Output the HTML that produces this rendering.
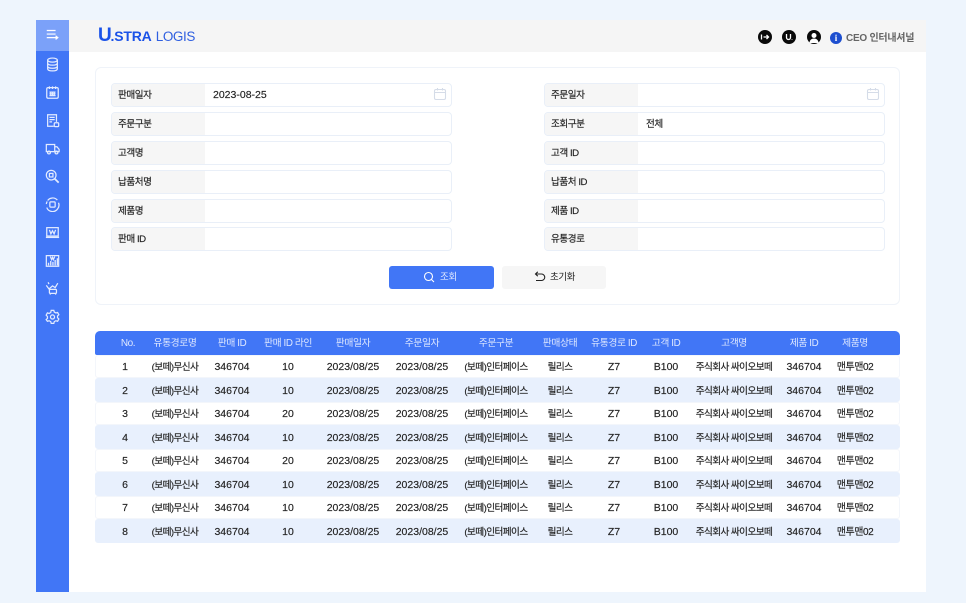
<!DOCTYPE html>
<html lang="ko"><head><meta charset="utf-8"><style>
*{box-sizing:border-box;margin:0;padding:0}
html,body{width:966px;height:603px;overflow:hidden;background:#eef5fd;font-family:"Liberation Sans","Noto Sans CJK KR",sans-serif;color:#222}
.a{position:absolute}
#side{left:36px;top:20px;width:33px;height:572px;background:#4176f6}
#side .top{position:absolute;left:0;top:0;width:33px;height:31px;background:#7ba1f9}
#side svg{position:absolute;left:9px;width:15px;height:15px;margin-top:1px;fill:none;stroke:#e3ebff;stroke-width:1.4}
#main{left:69px;top:20px;width:857px;height:572px;background:#fff}
#head{left:69px;top:20px;width:857px;height:32px;background:#f5f5f5}
#panel{left:95px;top:67px;width:805px;height:238px;border:1px solid #eff3f9;border-radius:6px;background:#fff}
.f{position:absolute;width:341px;height:24px;border:1px solid #e9eff8;border-radius:4px;background:#fff;overflow:hidden;font-size:9.6px;letter-spacing:-.45px;line-height:23px;-webkit-text-stroke:.15px #222}
.f b{display:block;position:absolute;left:0;top:0;width:93px;height:22px;background:#f6f6f6;font-weight:normal;padding-left:6px;color:#222}
.f i{position:absolute;left:101px;top:0;font-style:normal;color:#222}
.f i.n{font-size:10.5px;letter-spacing:0;line-height:22px}
.f svg{position:absolute;left:321px;top:3px;width:14px;height:14px;fill:none;stroke:#d5dce8;stroke-width:1.1}
.btn{position:absolute;top:266px;height:23px;border-radius:3px;font-size:9.5px;letter-spacing:-.4px;line-height:24px}
.row{position:absolute;left:95px;width:805px;height:23px;font-size:10.5px;line-height:23px;border-radius:3px;background:#fff;border:1px solid #f3f6fb;-webkit-text-stroke:.15px #222}
.row.b{background:#e8f0fd;border-color:#e8f0fd}
.row.b span{top:1px}
.row.h{background:#4176f6;border-color:#4176f6;color:#dfe8ff;border-radius:5px 5px 2px 2px;font-size:9.8px;letter-spacing:-.4px;height:24px;line-height:24px;-webkit-text-stroke:0}
.row span{position:absolute;top:0;width:120px;margin-left:-61px;text-align:center;white-space:nowrap}
.row span:nth-child(1){left:33px;font-size:10px}.row span:nth-child(2){left:80px}.row span:nth-child(3){left:137px}.row span:nth-child(4){left:193px}.row span:nth-child(5){left:258px}.row span:nth-child(6){left:327px}.row span:nth-child(7){left:401px}.row span:nth-child(8){left:465px}.row span:nth-child(9){left:519px}.row span:nth-child(10){left:571px}.row span:nth-child(11){left:639px}.row span:nth-child(12){left:709px}.row span:nth-child(13){left:760px}
.d span:nth-child(1){left:30px;font-size:10.5px}
.d span:nth-child(2),.d span:nth-child(7),.d span:nth-child(8),.d span:nth-child(11){font-size:9.6px;letter-spacing:-.55px}
.d span:nth-child(13){font-size:10px;letter-spacing:-.45px}
.ic{position:absolute;top:30px;width:14px;height:14px;border-radius:50%;background:#0a0a0a}
</style></head><body>
<div class="a" id="main"></div>
<div class="a" id="head"></div>
<div class="a" id="side">
<div class="top"></div>
<svg style="top:6px" viewBox="0 0 17 17"><path d="M2 4h10M2 8h10M2 12h12M12 10l2.500 2-2.500 2" stroke="#fff"/></svg>
<svg style="top:36px" viewBox="0 0 17 17"><ellipse cx="8.500" cy="3.500" rx="5.500" ry="2.300"/><path d="M3 3.500v10c0 3 11 3 11 0v-10M3 7c0 3 11 3 11 0M3 10.500c0 3 11 3 11 0"/></svg>
<svg style="top:64px" viewBox="0 0 17 17"><rect x="2" y="3" width="13" height="12" rx="1.500"/><path d="M5 1.500v3M8.500 1.500v3M12 1.500v3M5 8h7M5 10h7M5 12h7M6.500 7.500v5M8.500 7.500v5M10.500 7.500v5"/></svg>
<svg style="top:92px" viewBox="0 0 17 17"><path d="M10 15H3V2h10v8M5 5h6M5 7.500h6M5 10h3"/><rect x="10.500" y="11" width="5" height="4.500" rx="1"/></svg>
<svg style="top:120px" viewBox="0 0 17 17"><path d="M11 12H1.500V4h9.500v8zM11 6.500h2.500l2.500 3V12h-5"/><circle cx="4.500" cy="13" r="1.600"/><circle cx="13" cy="13" r="1.600"/></svg>
<svg style="top:148px" viewBox="0 0 17 17"><circle cx="7" cy="7" r="5.500"/><rect x="5" y="5" width="4" height="4"/><path d="M11 11l4.500 4.500" stroke-width="2"/></svg>
<svg style="top:176px" viewBox="0 0 17 17"><path d="M3 4a7 7 0 0 1 11-.500M15.300 6.500a7 7 0 0 1-1 7A7 7 0 0 1 2 12M1.500 8a7 7 0 0 1 1-3"/><rect x="5.500" y="5.500" width="6" height="6" rx="1"/></svg>
<svg style="top:204px" viewBox="0 0 17 17"><rect x="2" y="3" width="13" height="9.500"/><path d="M1 14h15" stroke-width="1.600"/><path d="M5 5.500l1.700 4.500 1.800-3.500 1.800 3.500L12 5.500"/></svg>
<svg style="top:232px" viewBox="0 0 17 17"><path d="M1.500 3h14v12h-14z"/><path d="M4 14V11M6.500 14V9M9 14V10M11.500 14V8M14 14V6" stroke-width="1.500"/><path d="M6 4l1.500 3.500L8.500 5l1 2.500L11 4"/></svg>
<svg style="top:260px" viewBox="0 0 17 17"><path d="M1.500 5l3 4 4-3.500 3 2 3-5"/><rect x="5" y="9.500" width="8" height="4.500" rx="1"/><path d="M6 14.500v1M12 14.500v1M3.500 1.500l1 2"/></svg>
<svg style="top:288px" viewBox="0 0 17 17"><path d="M7 1.500h3l.500 2 1.800 1 2-.600 1.400 2.600-1.500 1.400v2l1.500 1.400-1.400 2.600-2-.600-1.800 1-.500 2H7l-.500-2-1.800-1-2 .600L1.300 12l1.500-1.400v-2L1.300 7l1.400-2.600 2 .600 1.800-1z"/><circle cx="8.500" cy="9" r="2.300"/></svg>
</div>
<div class="a" style="left:98px;top:26px;font:bold 14px/20px 'Liberation Sans',sans-serif;color:#1a52e8;letter-spacing:-.2px;white-space:nowrap"><span style="font-size:19px">U</span><span style="margin-left:-1px">.STRA</span> <span style="font-weight:normal;font-size:13.5px;color:#2f5fe0;letter-spacing:-.4px;margin-left:1px">LOGIS</span></div>
<div class="ic" style="left:758px"><svg width="14" height="14" viewBox="0 0 14 14" fill="none" stroke="#fff" stroke-width="1.300"><path d="M3.500 4.500v5M5.500 7h5M8.500 5l2 2-2 2"/></svg></div>
<div class="ic" style="left:782px"><svg width="14" height="14" viewBox="0 0 14 14" fill="none" stroke="#fff" stroke-width="1.300"><path d="M4.500 4v3.500a2 2 0 0 0 4 0V4M10 9.500v.5"/></svg></div>
<div class="ic" style="left:807px"><svg width="14" height="14" viewBox="0 0 14 14" fill="#fff"><circle cx="7" cy="5.500" r="2.500"/><path d="M2.500 13c0-6 9-6 9 0z"/></svg></div>
<div class="a" style="left:830px;top:32px;width:12px;height:12px;border-radius:50%;background:#1d4fd0;color:#fff;font:bold 9px/12px 'Liberation Serif',serif;text-align:center">i</div>
<div class="a" style="left:846px;top:31px;font-size:10px;line-height:15px;color:#666;white-space:nowrap;font-weight:bold;letter-spacing:-.25px">CEO 인터내셔널</div>
<div class="a" id="panel"></div>
<div class="f" style="left:111px;top:83px"><b>판매일자</b><i class="n">2023-08-25</i><svg viewBox="0 0 14 14"><rect x="1.500" y="2.500" width="11" height="10" rx="1.500"/><path d="M1.500 5.500h11M4.500 1v2.500M9.500 1v2.500"/></svg></div>
<div class="f" style="left:111px;top:112px"><b>주문구분</b></div>
<div class="f" style="left:111px;top:141px"><b>고객명</b></div>
<div class="f" style="left:111px;top:170px"><b>납품처명</b></div>
<div class="f" style="left:111px;top:199px"><b>제품명</b></div>
<div class="f" style="left:111px;top:227px"><b>판매 ID</b></div>
<div class="f" style="left:544px;top:83px"><b>주문일자</b><svg viewBox="0 0 14 14"><rect x="1.500" y="2.500" width="11" height="10" rx="1.500"/><path d="M1.500 5.500h11M4.500 1v2.500M9.500 1v2.500"/></svg></div>
<div class="f" style="left:544px;top:112px"><b>조회구분</b><i>전체</i></div>
<div class="f" style="left:544px;top:141px"><b>고객 ID</b></div>
<div class="f" style="left:544px;top:170px"><b>납품처 ID</b></div>
<div class="f" style="left:544px;top:199px"><b>제품 ID</b></div>
<div class="f" style="left:544px;top:227px"><b>유통경로</b></div>
<div class="btn" style="left:389px;width:105px;background:#4176f6;color:#dfe8ff"><svg class="a" style="left:34px;top:5px" width="12" height="12" viewBox="0 0 12 12" fill="none" stroke="#fff" stroke-width="1.100"><circle cx="5.500" cy="5.500" r="4"/><path d="M8.500 8.500l2.500 2.500"/></svg><span class="a" style="left:51px">조회</span></div>
<div class="btn" style="left:502px;width:104px;background:#f6f6f6"><svg class="a" style="left:31px;top:4px" width="13" height="13" viewBox="0 0 13 13" fill="none" stroke="#222" stroke-width="1.100"><path d="M3 4h5.500a3 3 0 0 1 0 6.500H3M4.800 1.800L2.500 4l2.300 2.200"/></svg><span class="a" style="left:48px">초기화</span></div>
<div class="row h" style="top:331px"><span>No.</span><span>유통경로명</span><span>판매 ID</span><span>판매 ID 라인</span><span>판매일자</span><span>주문일자</span><span>주문구분</span><span>판매상태</span><span>유통경로 ID</span><span>고객 ID</span><span>고객명</span><span>제품 ID</span><span>제품명</span></div>
<div class="row d" style="top:355px"><span>1</span><span>(보떼)무신사</span><span>346704</span><span>10</span><span>2023/08/25</span><span>2023/08/25</span><span>(보떼)인터페이스</span><span>릴리스</span><span>Z7</span><span>B100</span><span>주식회사 싸이오보떼</span><span>346704</span><span>맨투맨02</span></div>
<div class="row d b" style="top:378px;height:24px"><span>2</span><span>(보떼)무신사</span><span>346704</span><span>10</span><span>2023/08/25</span><span>2023/08/25</span><span>(보떼)인터페이스</span><span>릴리스</span><span>Z7</span><span>B100</span><span>주식회사 싸이오보떼</span><span>346704</span><span>맨투맨02</span></div>
<div class="row d" style="top:402px"><span>3</span><span>(보떼)무신사</span><span>346704</span><span>20</span><span>2023/08/25</span><span>2023/08/25</span><span>(보떼)인터페이스</span><span>릴리스</span><span>Z7</span><span>B100</span><span>주식회사 싸이오보떼</span><span>346704</span><span>맨투맨02</span></div>
<div class="row d b" style="top:425px;height:24px"><span>4</span><span>(보떼)무신사</span><span>346704</span><span>10</span><span>2023/08/25</span><span>2023/08/25</span><span>(보떼)인터페이스</span><span>릴리스</span><span>Z7</span><span>B100</span><span>주식회사 싸이오보떼</span><span>346704</span><span>맨투맨02</span></div>
<div class="row d" style="top:449px"><span>5</span><span>(보떼)무신사</span><span>346704</span><span>20</span><span>2023/08/25</span><span>2023/08/25</span><span>(보떼)인터페이스</span><span>릴리스</span><span>Z7</span><span>B100</span><span>주식회사 싸이오보떼</span><span>346704</span><span>맨투맨02</span></div>
<div class="row d b" style="top:472px;height:24px"><span>6</span><span>(보떼)무신사</span><span>346704</span><span>10</span><span>2023/08/25</span><span>2023/08/25</span><span>(보떼)인터페이스</span><span>릴리스</span><span>Z7</span><span>B100</span><span>주식회사 싸이오보떼</span><span>346704</span><span>맨투맨02</span></div>
<div class="row d" style="top:496px"><span>7</span><span>(보떼)무신사</span><span>346704</span><span>10</span><span>2023/08/25</span><span>2023/08/25</span><span>(보떼)인터페이스</span><span>릴리스</span><span>Z7</span><span>B100</span><span>주식회사 싸이오보떼</span><span>346704</span><span>맨투맨02</span></div>
<div class="row d b" style="top:519px;height:24px"><span>8</span><span>(보떼)무신사</span><span>346704</span><span>10</span><span>2023/08/25</span><span>2023/08/25</span><span>(보떼)인터페이스</span><span>릴리스</span><span>Z7</span><span>B100</span><span>주식회사 싸이오보떼</span><span>346704</span><span>맨투맨02</span></div>
</body></html>
